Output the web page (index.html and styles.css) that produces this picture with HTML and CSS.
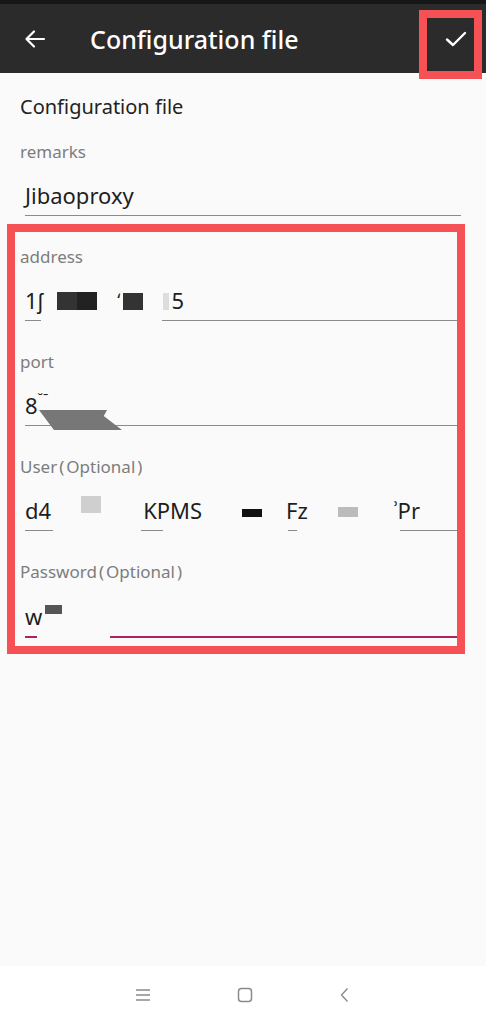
FILE: index.html
```html
<!DOCTYPE html>
<html>
<head>
<meta charset="utf-8">
<link rel="stylesheet" href="styles.css">
</head>
<body>
<div class="status"></div>
<header class="appbar">
  <svg class="back" width="22" height="20" viewBox="0 0 22 20"><path d="M20 10H3M10 2.5L2.5 10L10 17.5" fill="none" stroke="#fff" stroke-width="2.2" stroke-linecap="round" stroke-linejoin="round"/></svg>
  <div class="title">Configuration file</div>
  <div class="check-wrap">
    <svg width="22" height="18" viewBox="0 0 22 18"><path d="M2 9.5L8 15L20 3" fill="none" stroke="#fff" stroke-width="2.4" stroke-linecap="round" stroke-linejoin="round"/></svg>
    <div class="hl-check"></div>
  </div>
</header>

<main class="content">
  <div class="section">Configuration file</div>

  <div class="field">
    <div class="label">remarks</div>
    <div class="value"><span class="txt">Jibaoproxy</span></div>
  </div>

  <div class="group">
    <div class="hl-group"></div>
    <div class="field">
      <div class="label">address</div>
      <div class="value">
        <span class="txt">1ʃ</span><span class="blk b-a1"></span><span class="blk b-a2"></span><span class="txt sm">ʻ</span><span class="blk b-a3"></span><span class="blk b-a4"></span><span class="txt">5</span>
        <span class="mask" style="left:16px;width:121px"></span>
      </div>
    </div>

    <div class="field">
      <div class="label">port</div>
      <div class="value">
        <span class="txt">8</span><span class="txt tick">˘ˉ</span>
        <span class="smear"></span>
      </div>
    </div>

    <div class="field">
      <div class="label">User<span class="par">(</span>Optional<span class="par">)</span></div>
      <div class="value">
        <span class="txt">d4</span><span class="blk b-u1"></span><span class="txt u-k">KPMS</span><span class="blk b-u2"></span><span class="txt u-f">Fz</span><span class="blk b-u3"></span><span class="txt u-p">ʾPr</span>
        <span class="mask" style="left:28px;width:88px"></span>
        <span class="mask" style="left:138px;width:125px"></span>
        <span class="mask" style="left:272px;width:103px"></span>
      </div>
    </div>

    <div class="field">
      <div class="label">Password<span class="par">(</span>Optional<span class="par">)</span></div>
      <div class="value focused">
        <span class="txt">w</span><span class="blk b-p1"></span>
        <span class="mask focusmask" style="left:12px;width:73px"></span>
      </div>
    </div>
  </div>
</main>

<nav class="navbar">
  <svg width="18" height="14" viewBox="0 0 18 14"><path d="M2 2H16M2 7H16M2 12H16" stroke="#8a8a8a" stroke-width="1.4"/></svg>
  <svg width="18" height="18" viewBox="0 0 18 18"><rect x="2.5" y="2.5" width="13" height="13" rx="3" fill="none" stroke="#8a8a8a" stroke-width="1.5"/></svg>
  <svg width="14" height="18" viewBox="0 0 14 18"><path d="M9.5 2.5L3.5 9L9.5 15.5" fill="none" stroke="#8a8a8a" stroke-width="1.4"/></svg>
</nav>
</body>
</html>
```

FILE: styles.css
```css
* { box-sizing: border-box; }
html, body { margin: 0; padding: 0; }
body {
  width: 486px;
  height: 1024px;
  background: #fafafa;
  font-family: "Noto Sans", "Open Sans", sans-serif;
  display: flex;
  flex-direction: column;
  overflow: hidden;
}
.status { height: 4px; background: #171717; flex: none; }
.appbar {
  height: 69px;
  background: #2b2b2b;
  display: flex;
  align-items: center;
  flex: none;
  position: relative;
}
.back { margin-left: 24px; }
.title {
  margin-left: 44px;
  color: #fff;
  font-size: 25px;
  font-weight: 500;
  flex: 1;
}
.check-wrap {
  width: 46px;
  height: 46px;
  margin-right: 7px;
  display: flex;
  align-items: center;
  justify-content: center;
  position: relative;
}
.hl-check {
  position: absolute;
  left: -14px;
  top: -6px;
  width: 63px;
  height: 69px;
  border: 8px solid #f65155;
}
.content {
  flex: 1;
  padding: 20px 0 0 20px;
}
.section {
  font-size: 20px;
  color: #222;
  height: 48px;
  line-height: 28px;
}
.field {
  height: 105px;
  padding-right: 25px;
}
.label {
  font-size: 17px;
  color: #7d7d7d;
  line-height: 22px;
}
.par { margin: 0 2px; }
.value {
  position: relative;
  margin: 11px 0 0 5px;
  height: 42px;
  border-bottom: 1px solid #8a8a8a;
  display: flex;
  align-items: center;
}
.value.focused { border-bottom: 2px solid #b0215f; margin-top: 13px; }
.txt {
  font-size: 22px;
  color: #1e1e1e;
  line-height: 40px;
  position: relative;
  z-index: 2;
}
.txt.sm { margin-left: 20px; font-size: 18px; }
.blk { display: inline-block; position: relative; z-index: 2; }
.b-a1 { width: 20px; height: 18px; background: #333; margin-left: 14px; margin-top: 3px; }
.b-a2 { width: 20px; height: 18px; background: #222; margin-top: 3px; }
.b-a3 { width: 20px; height: 17px; background: #333; margin-left: 3px; margin-top: 4px; }
.b-a4 { width: 6px; height: 17px; background: #ddd; margin-left: 20px; margin-top: 4px; margin-right: 2px; }
.tick { font-size: 14px; margin-top: -12px; }
.smear {
  position: absolute;
  left: 14px;
  top: 26px;
  width: 83px;
  height: 20px;
  background: #777;
  clip-path: polygon(0 0, 82% 0, 78% 30%, 100% 100%, 18% 100%);
  z-index: 3;
}
.b-u1 { width: 20px; height: 17px; background: #cfcfcf; margin-left: 30px; margin-top: -10px; }
.u-k { margin-left: 42px; }
.b-u2 { width: 20px; height: 8px; background: #111; margin-left: 40px; margin-top: 6px; }
.u-f { margin-left: 24px; }
.b-u3 { width: 20px; height: 10px; background: #bbb; margin-left: 30px; margin-top: 4px; }
.u-p { margin-left: 36px; }
.b-p1 { width: 17px; height: 9px; background: #555; margin-left: 3px; margin-top: -14px; }
.mask {
  position: absolute;
  bottom: -2px;
  height: 4px;
  background: #fafafa;
  z-index: 1;
}
.focusmask { bottom: -3px; height: 5px; }
.group {
  position: relative;
}
.hl-group {
  position: absolute;
  left: -13px;
  top: -22px;
  width: 458px;
  height: 430px;
  border: 8px solid #f65155;
  pointer-events: none;
  z-index: 5;
}
.navbar {
  height: 58px;
  flex: none;
  background: #fff;
  display: flex;
  align-items: center;
  justify-content: center;
  gap: 84px;
}
```
